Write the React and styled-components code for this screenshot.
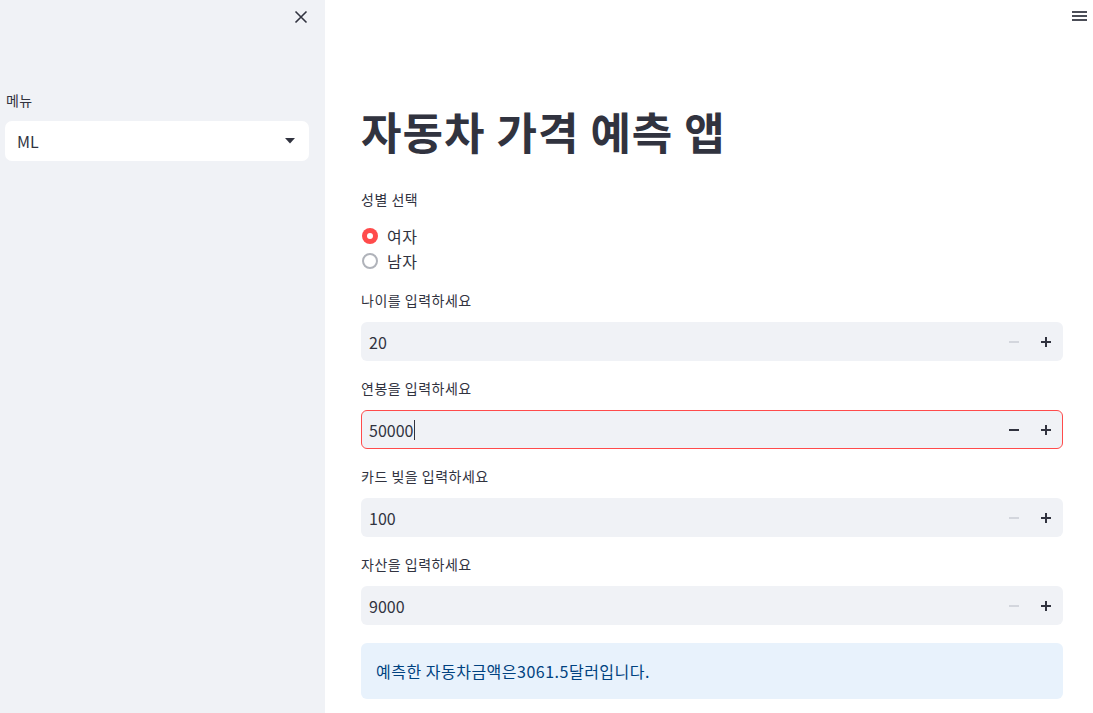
import React from "react";
import styled, { createGlobalStyle } from "styled-components";

const Global = createGlobalStyle`
  html, body { margin: 0; padding: 0; background: #ffffff; }
  body {
    font-family: "Noto Sans CJK KR", "Noto Sans", sans-serif;
    color: rgb(49, 51, 63);
  }
  * { box-sizing: border-box; }
`;

const Page = styled.div`
  display: flex;
  width: 1093px;
  height: 713px;
  overflow: hidden;
`;

const Sidebar = styled.aside`
  width: 325px;
  flex: none;
  background: #f0f2f6;
  display: flex;
  flex-direction: column;
  padding: 0 16px 0 5px;
`;

const SideTop = styled.div`
  height: 89px;
  display: flex;
  justify-content: flex-end;
  align-items: flex-start;
  padding-top: 9px;
`;

const IconButton = styled.button`
  border: 0;
  background: transparent;
  padding: 0;
  width: 16px;
  height: 16px;
  display: flex;
  align-items: center;
  justify-content: center;
  color: rgb(49, 51, 63);
  cursor: pointer;
`;

const SideLabel = styled.div`
  font-size: 14px;
  line-height: 22px;
  padding-left: 1px;
  margin-bottom: 10px;
  letter-spacing: 0.4px;
`;

const Select = styled.div`
  height: 40px;
  background: #ffffff;
  border-radius: 7px;
  display: flex;
  align-items: center;
  justify-content: space-between;
  padding: 0 14px 0 12px;
  font-size: 16px;
`;

const Main = styled.main`
  flex: 1;
  position: relative;
  padding: 104px 30px 0 36px;
  display: flex;
  flex-direction: column;
`;

const Hamburger = styled.div`
  position: absolute;
  top: 11px;
  right: 6px;
  width: 15px;
  display: flex;
  flex-direction: column;
  gap: 2px;
`;

const HLine = styled.span`
  display: block;
  height: 2px;
  background: #4b4d57;
`;

const Title = styled.h1`
  margin: 0 0 30px;
  font-size: 44px;
  line-height: 54px;
  font-weight: 700;
  letter-spacing: 1px;
  color: rgb(49, 51, 63);
`;

const Label = styled.div`
  font-size: 14px;
  line-height: 22px;
  letter-spacing: 0.5px;
  margin-bottom: ${(p) => p.$mb || 11}px;
`;

const RadioGroup = styled.div`
  display: flex;
  flex-direction: column;
  gap: 3px;
  margin-bottom: 17px;
`;

const RadioRow = styled.label`
  display: flex;
  align-items: center;
  height: 22px;
  font-size: 16px;
  gap: 9px;
  padding-left: 1px;
  letter-spacing: 0.5px;
`;

const RadioDot = styled.span`
  width: 16px;
  height: 16px;
  border-radius: 50%;
  flex: none;
  display: flex;
  align-items: center;
  justify-content: center;
  background: ${(p) => (p.$on ? "#ff4b4b" : "#ffffff")};
  border: ${(p) => (p.$on ? "none" : "2px solid #b0b3ba")};
  &::after {
    content: "";
    display: ${(p) => (p.$on ? "block" : "none")};
    width: 6px;
    height: 6px;
    border-radius: 50%;
    background: #ffffff;
  }
`;

const Field = styled.div`
  display: flex;
  flex-direction: column;
  margin-bottom: 16px;
`;

const NumberBox = styled.div`
  height: 39px;
  background: #f0f2f6;
  border-radius: 6px;
  border: 1px solid ${(p) => (p.$focus ? "#ff4b4b" : "transparent")};
  display: flex;
  align-items: center;
  padding-left: 7px;
`;

const Value = styled.div`
  flex: 1;
  font-size: 16px;
  display: flex;
  align-items: center;
`;

const Caret = styled.span`
  display: inline-block;
  width: 1px;
  height: 20px;
  background: #31333f;
  margin-left: 1px;
`;

const StepButton = styled.button`
  width: 32px;
  height: 100%;
  border: 0;
  background: transparent;
  padding: 0;
  display: flex;
  align-items: center;
  justify-content: center;
  color: ${(p) => (p.$disabled ? "#d3d6dd" : "#31333f")};
`;

const Info = styled.div`
  margin-top: 2px;
  height: 56px;
  background: rgb(232, 242, 252);
  border-radius: 6px;
  display: flex;
  align-items: center;
  padding-left: 15px;
  font-size: 16px;
  letter-spacing: 0.5px;
  color: rgb(0, 66, 128);
`;

const Minus = () => (
  <svg width="10" height="10" viewBox="0 0 10 10">
    <rect x="0" y="4" width="10" height="2" fill="currentColor" />
  </svg>
);
const Plus = () => (
  <svg width="10" height="10" viewBox="0 0 10 10">
    <rect x="0" y="4" width="10" height="2" fill="currentColor" />
    <rect x="4" y="0" width="2" height="10" fill="currentColor" />
  </svg>
);

const NumberInput = ({ label, value, focus, minusDisabled }) => (
  <Field>
    <Label>{label}</Label>
    <NumberBox $focus={focus}>
      <Value>
        {value}
        {focus && <Caret />}
      </Value>
      <StepButton $disabled={minusDisabled}>
        <Minus />
      </StepButton>
      <StepButton>
        <Plus />
      </StepButton>
    </NumberBox>
  </Field>
);

export default function App() {
  return (
    <>
      <Global />
      <Page>
        <Sidebar>
          <SideTop>
            <IconButton aria-label="close">
              <svg width="14" height="14" viewBox="0 0 14 14">
                <path d="M1.5 1.5 L12.5 12.5 M12.5 1.5 L1.5 12.5" stroke="currentColor" strokeWidth="1.6" />
              </svg>
            </IconButton>
          </SideTop>
          <SideLabel>메뉴</SideLabel>
          <Select>
            <span>ML</span>
            <svg width="10" height="6" viewBox="0 0 10 6">
              <path d="M0 0 L10 0 L5 5.5 Z" fill="#31333f" />
            </svg>
          </Select>
        </Sidebar>
        <Main>
          <Hamburger>
            <HLine />
            <HLine />
            <HLine />
          </Hamburger>
          <Title>자동차 가격 예측 앱</Title>
          <Label $mb={15}>성별 선택</Label>
          <RadioGroup>
            <RadioRow>
              <RadioDot $on />
              여자
            </RadioRow>
            <RadioRow>
              <RadioDot />
              남자
            </RadioRow>
          </RadioGroup>
          <NumberInput label="나이를 입력하세요" value="20" minusDisabled />
          <NumberInput label="연봉을 입력하세요" value="50000" focus />
          <NumberInput label="카드 빚을 입력하세요" value="100" minusDisabled />
          <NumberInput label="자산을 입력하세요" value="9000" minusDisabled />
          <Info>예측한 자동차금액은3061.5달러입니다.</Info>
        </Main>
      </Page>
    </>
  );
}
